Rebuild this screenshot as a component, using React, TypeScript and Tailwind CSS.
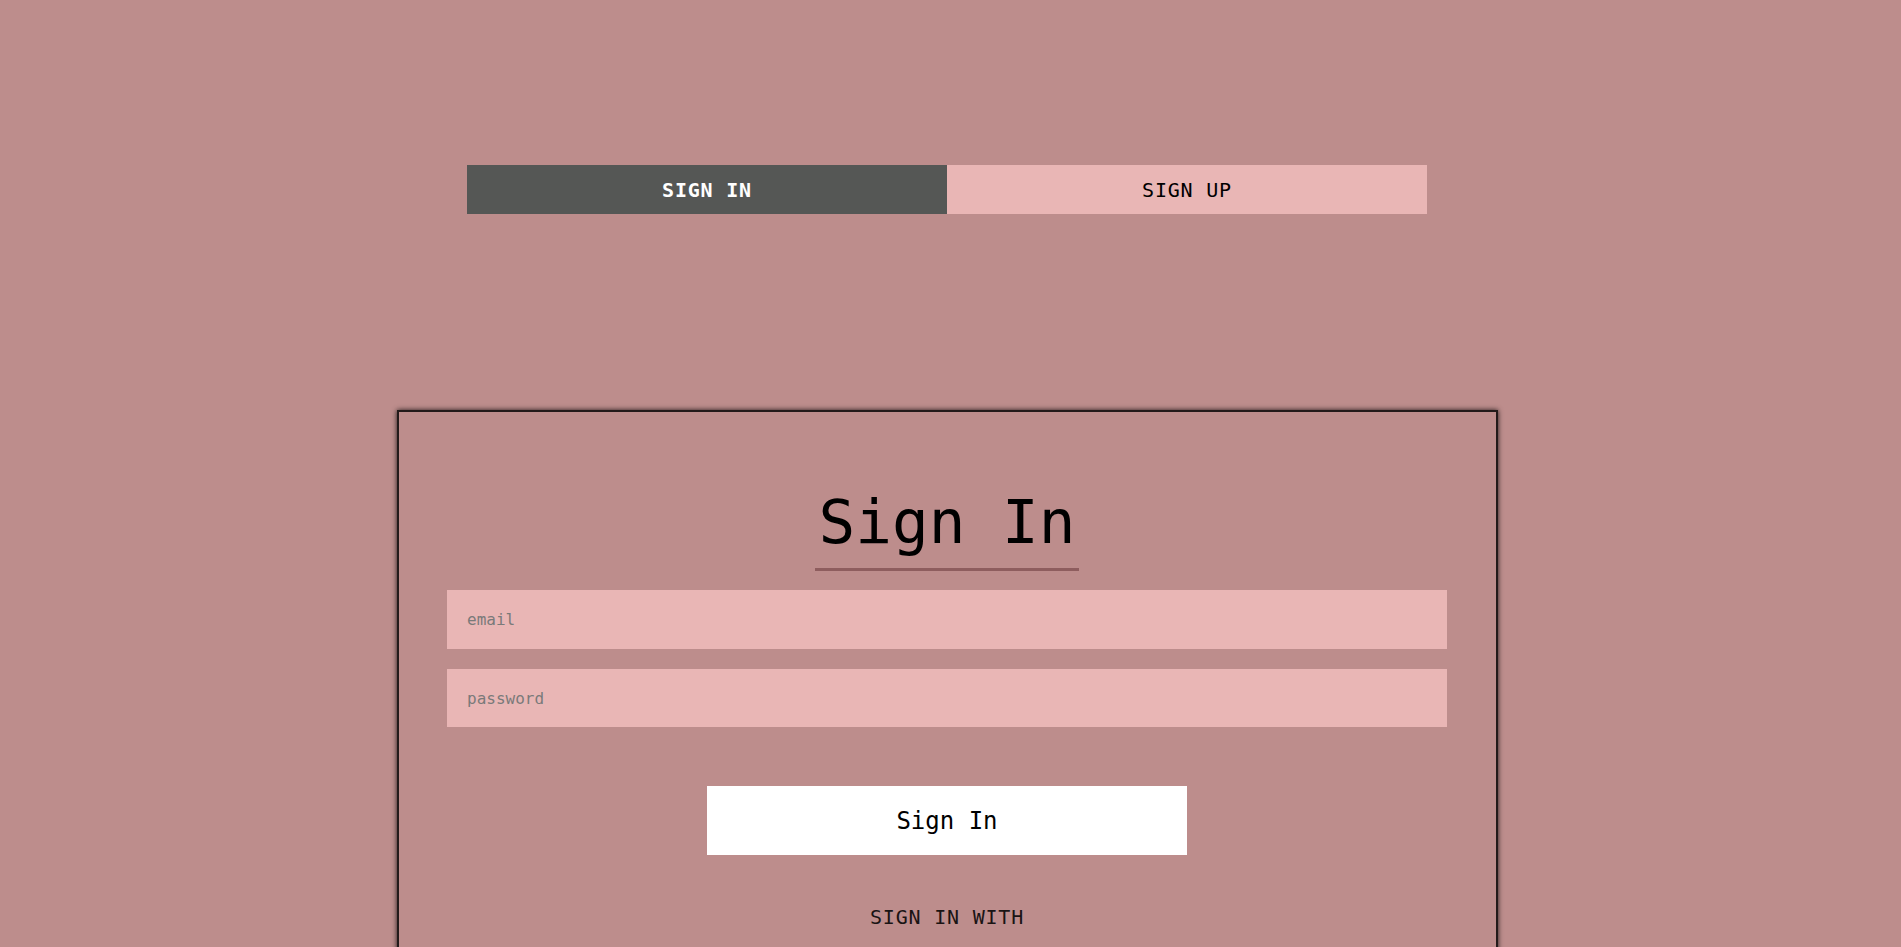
export default function App() {
  return (
    <div
      className="min-h-screen bg-[#bd8d8c] flex flex-col items-center pr-[7px] pt-[165px] pb-[80px]"
      style={{ fontFamily: '"DejaVu Sans Mono", "Liberation Mono", monospace' }}
    >
      {/* Tabs */}
      <div className="flex w-[960px] h-[49px]">
        <button className="flex-1 bg-[#555755] text-white text-[20px] font-semibold tracking-[0.8px] leading-none">
          SIGN IN
        </button>
        <button className="flex-1 bg-[#e9b6b5] text-black text-[20px] tracking-[0.8px] leading-none">
          SIGN UP
        </button>
      </div>

      {/* Card */}
      <div className="mt-[196px] w-[1101px] border-2 border-[#231a1a] shadow-[0_0_5px_rgba(0,0,0,0.85)] flex flex-col items-center pt-[80px] pb-[120px]">
        <h1 className="inline-block text-[61px] leading-[60px] text-black px-[3px] pb-[16px] border-b-[3px] border-[#8e5d5e]">
          Sign In
        </h1>

        <div className="mt-[19px] flex flex-col gap-[20px]">
          <input
            type="email"
            placeholder="email"
            className="w-[1000px] h-[59px] bg-[#e9b6b5] px-[20px] text-[16px] text-black placeholder:text-[#7a7a7a] outline-none"
          />
          <input
            type="password"
            placeholder="password"
            className="w-[1000px] h-[58px] bg-[#e9b6b5] px-[20px] text-[16px] text-black placeholder:text-[#7a7a7a] outline-none"
          />
        </div>

        <button className="mt-[59px] w-[480px] h-[69px] bg-white text-black text-[24px] leading-none">
          Sign In
        </button>

        <p className="mt-[52px] text-[20px] leading-none tracking-[0.8px] text-[#1a1414]">
          SIGN IN WITH
        </p>
      </div>
    </div>
  );
}
